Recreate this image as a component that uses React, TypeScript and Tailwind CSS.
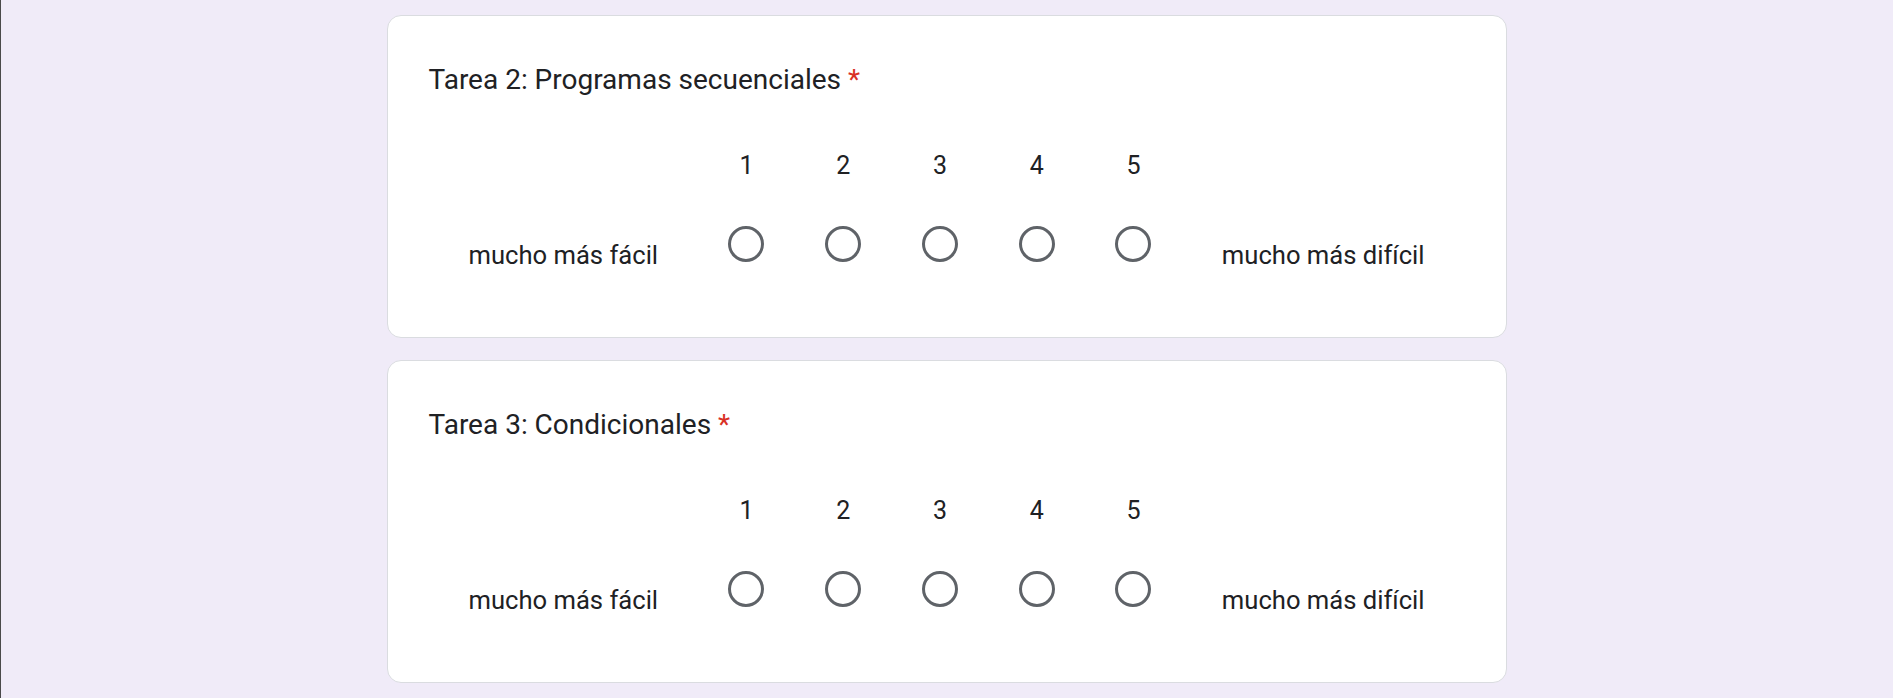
const questions = ["Tarea 2: Programas secuenciales", "Tarea 3: Condicionales"];

const ScaleQuestion = ({ title }: { title: string }) => (
  <div className="w-[1120px] mx-auto bg-white border border-[#dadce0] rounded-[14px] px-[41px] pt-[43px] pb-[51.5px]">
    <div className="text-[28px] leading-[42px] text-[#202124]">
      {title} <span className="text-[#d93025]">*</span>
    </div>
    <div className="flex mt-[47px]">
      <div className="shrink-0 self-end px-10 pb-[13px] text-[25.6px] leading-9 text-[#202124]">mucho más fácil</div>
      {[1, 2, 3, 4, 5].map((n) => (
        <div key={n} className="flex-1 flex flex-col items-center">
          <div className="text-[25px] leading-9 text-[#202124]">{n}</div>
          <div className="mt-[17.5px] h-[84px] flex items-center justify-center">
            <div className="w-9 h-9 rounded-full border-[3.5px] border-[#5f6368]" />
          </div>
        </div>
      ))}
      <div className="shrink-0 self-end px-10 pb-[13px] text-[25.6px] leading-9 text-[#202124]">mucho más difícil</div>
    </div>
  </div>
);

export default function App() {
  return (
    <div className="flex min-h-[698px] bg-[#f0ebf8] font-['Roboto',sans-serif]">
      <div className="w-px bg-[#4a4a4a]" />
      <div className="flex-1 flex flex-col gap-[22px] py-[15px] -ml-px">
        {questions.map((q) => (
          <ScaleQuestion key={q} title={q} />
        ))}
      </div>
    </div>
  );
}
